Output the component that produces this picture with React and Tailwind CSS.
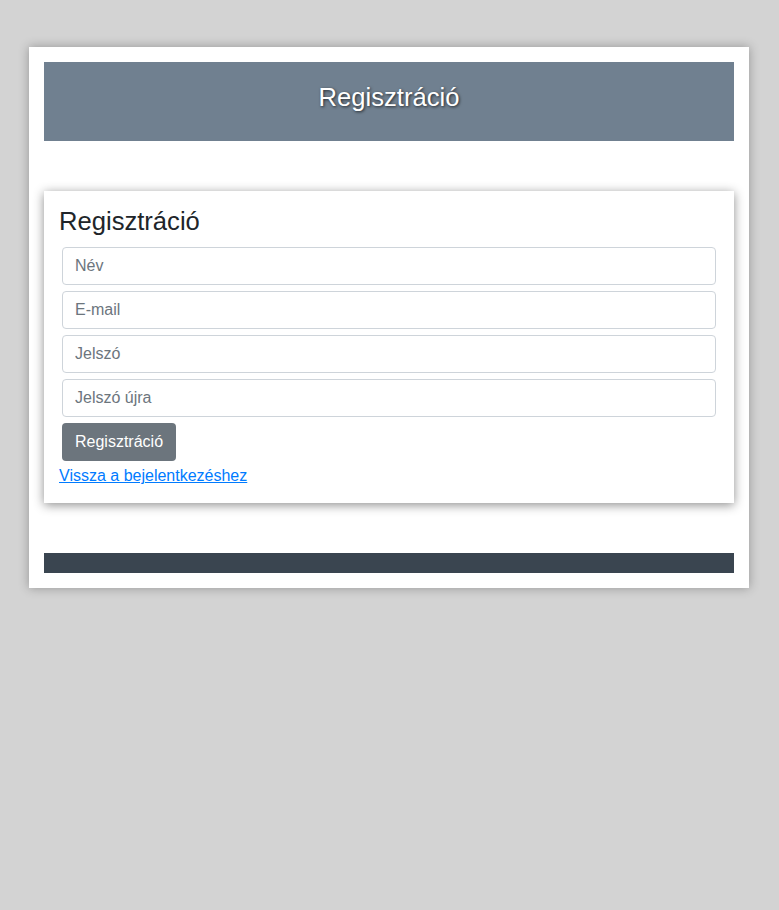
export default function App() {
	const fields = ["Név", "E-mail", "Jelszó", "Jelszó újra"];

	return <div className="min-h-screen bg-[#d3d3d3] pt-[47px] font-['Liberation_Sans',Arial,sans-serif]">
		<div className="ml-[29px] w-[720px] bg-white p-[15px] shadow-[0_0_10px_rgba(0,0,0,0.3)]">
			{/* header */}
			<div className="h-[79px] bg-[#708090] pt-[20px] text-center">
				<h1 className="text-[25.6px] leading-[31px] text-white [text-shadow:1px_1px_3px_rgba(0,0,0,0.7)]">Regisztráció</h1>
			</div>

			{/* form card */}
			<div className="mt-[50px] bg-white p-[15px] shadow-[0_2px_10px_rgba(0,0,0,0.45)]">
				<h2 className="mb-[8px] text-[25.6px] leading-[30px] text-[#212529]">Regisztráció</h2>
				<div className="flex flex-col items-start">
					{fields.map(f => (
						<input
							key={f}
							type={f.startsWith("Jelszó") ? "password" : "text"}
							placeholder={f}
							className="m-[3px] block h-[38px] w-[calc(100%-6px)] rounded-[4px] border border-[#ced4da] px-[12px] text-[16px] text-[#495057] placeholder:text-[#6c757d] outline-none"
						/>
					))}
					<button className="m-[3px] h-[38px] rounded-[4px] bg-[#6c757d] px-[13px] text-[16px] text-white">
						Regisztráció
					</button>
				</div>
				<div className="leading-[24px]">
					<a href="#" className="text-[16px] text-[#007bff] underline">Vissza a bejelentkezéshez</a>
				</div>
			</div>

			{/* footer */}
			<div className="mt-[50px] h-[20px] bg-[#3a4550]" />
		</div>
	</div>;
}
